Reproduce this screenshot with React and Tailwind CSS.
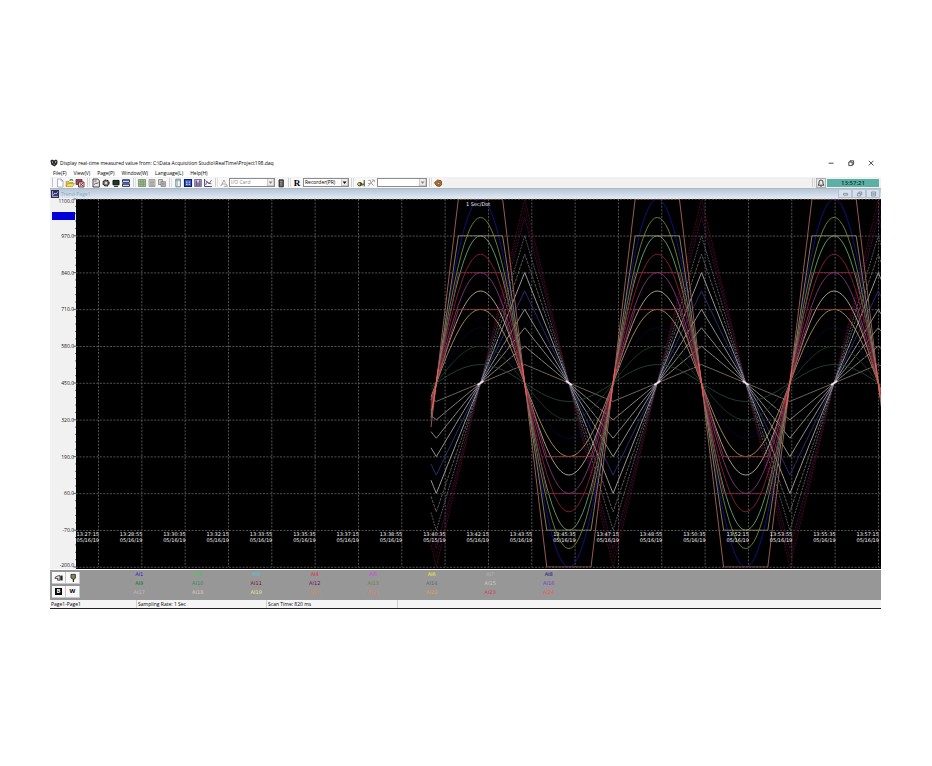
import { useState } from "react";
import clsx from "clsx";

// Chart geometry, in viewBox units
const CHART_W = 831;
const CHART_H = 371;
const PLOT_LEFT = 26;
const MID_Y = 185;
const UNIT = 18.4; // height of 65 engineering units
const START_X = 381;
const ZERO_X = 386.3; // first rising zero crossing
const QUARTER = 44.2;

const MENUS = ["File(F)", "View(V)", "Page(P)", "Window(W)", "Language(L)", "Help(H)"];

const Y_TICKS = ["1100.0", "970.0", "840.0", "710.0", "580.0", "450.0", "320.0", "190.0", "60.0", "-70.0", "-200.0"];

const TIMES = [
  "13:27:15", "13:28:55", "13:30:35", "13:32:15", "13:33:55", "13:35:35", "13:37:15",
  "13:38:55", "13:40:35", "13:42:15", "13:43:55", "13:45:35", "13:47:15", "13:48:55",
  "13:50:35", "13:52:15", "13:53:55", "13:55:35", "13:57:15",
];

// shape, amplitude (in UNITs), colour, dash
const SERIES = [
  ["tri", 10, "#4c0c22", "2 1"],
  ["tri", 9, "#4a1040", "2 1"],
  ["tri", 9.5, "#360a20", "2 1"],
  ["tri", 8, "#5c625c", "2 1"],
  ["tri", 7, "#646464", "3 1"],
  ["tri", 6, "#a8a8a8"],
  ["tri", 5, "#30307e"],
  ["tri", 4, "#a0a0a0"],
  ["tri", 3, "#96968e"],
  ["tri", 2, "#98908c"],
  ["tri", 1, "#807068"],
  ["sin", 1, "#244638"],
  ["sin", 2, "#1c3a28"],
  ["sin", 3, "#09092c"],
  ["sin", 10, "#12128c"],
  ["sin", 9, "#6c8a3c"],
  ["sin", 8, "#5fa878"],
  ["trap", 8, "#94865c"],
  ["trap", 6, "#842044"],
  ["sin", 6, "#7c3a78"],
  ["sin", 7, "#8c2034"],
  ["sin", 5, "#b8ac94"],
  ["sin", 4, "#b08e5c"],
  ["trap", 4, "#94343a"],
  ["trap", 10, "#a8645a"],
];

const CHANNELS = [
  ["AI1", "text-[#2b1fd0]"], ["AI2", "text-[#35d04a]"], ["AI3", "text-[#45d0d8]"], ["AI4", "text-[#e02840]"],
  ["AI5", "text-[#d03ae0]"], ["AI6", "text-[#f0f030]"], ["AI7", "text-[#b4b4b4]"], ["AI8", "text-[#101080]"],
  ["AI9", "text-[#0a7a1a]"], ["AI10", "text-[#2f8a5e]"], ["AI11", "text-[#7a1030]"], ["AI12", "text-[#7a0a60]"],
  ["AI13", "text-[#7c7c4c]"], ["AI14", "text-[#6c6470]"], ["AI15", "text-[#cccccc]"], ["AI16", "text-[#7a3cc8]"],
  ["AI17", "text-[#c8b8bc]"], ["AI18", "text-[#dcc4c0]"], ["AI19", "text-[#ece48c]"], ["AI20", "text-[#d08c58]"],
  ["AI21", "text-[#d88468]"], ["AI22", "text-[#e0a03c]"], ["AI23", "text-[#dc3460]"], ["AI24", "text-[#e85c50]"],
];

function wave(shape, x) {
  const t = (x - ZERO_X) / QUARTER;
  if (shape === "sin") return Math.sin((t * Math.PI) / 2);
  // triangle trails the sine by a quarter period
  const p = shape === "tri" ? t - 1 : t;
  const tri = (2 / Math.PI) * Math.asin(Math.sin((p * Math.PI) / 2));
  return shape === "tri" ? tri : Math.max(-1, Math.min(1, tri * 2));
}

function seriesPath(shape, amp) {
  const pts = [];
  // every shape bends on a half quarter, so sample on those
  const step = QUARTER / 16;
  pts.push([START_X, wave(shape, START_X)]);
  for (let x = ZERO_X - step; x < CHART_W + step; x += step) pts.push([x, wave(shape, x)]);
  return pts
    .map(([x, v], i) => `${i ? "L" : "M"}${x.toFixed(1)} ${(MID_Y - v * amp * UNIT).toFixed(1)}`)
    .join("");
}

function TrendChart() {
  const rows = Y_TICKS.map((label, i) => ({ label, y: 1 + i * 36.8 }));
  const cols = TIMES.map((time, i) => ({ time, x: 48.5 + i * 43.33 }));
  return (
    <svg viewBox={`0 0 ${CHART_W} ${CHART_H}`} className="block h-auto w-full bg-[#f1f1f1]" role="img" aria-label="Trend-Page1">
      <defs>
        <clipPath id="plot">
          <rect x={PLOT_LEFT} y="1" width={CHART_W - PLOT_LEFT} height="368.5" />
        </clipPath>
      </defs>
      <rect x={PLOT_LEFT} y="1" width={CHART_W - PLOT_LEFT} height="370" fill="#000" />

      {/* Value axis */}
      <rect x="2" y="14" width="23" height="8" fill="#0000d8" />
      {rows.map(({ label, y }, i) => (
        <g key={label}>
          <text
            x="24"
            y={i === 0 ? 5 : i === 10 ? 369 : y + 2}
            textAnchor="end"
            fontSize="5"
            fill="#111"
          >
            {label}
          </text>
          <path d={`M23.5 ${y}H26`} stroke="#333" strokeWidth="0.8" />
          {i < 10 && [1, 2, 3, 4].map((n) => (
            <path key={n} d={`M25 ${y + n * 7.36}h1`} stroke="#444" strokeWidth="0.8" />
          ))}
        </g>
      ))}

      <g stroke="#5c5c5c" strokeWidth="0.9" strokeDasharray="2 1.4">
        {rows.map(({ label, y }) => (
          <path key={label} d={`M${PLOT_LEFT} ${y + 0.3}H${CHART_W}`} />
        ))}
        {cols.map(({ time, x }) => (
          <path key={time} d={`M${x} 1V369`} />
        ))}
      </g>

      <g clipPath="url(#plot)" fill="none" strokeWidth="0.9">
        {SERIES.map(([shape, amp, color, dash]) => (
          <path key={shape + amp} d={seriesPath(shape, amp)} stroke={color} strokeDasharray={dash} />
        ))}
        {/* bright knots where all the traces cross the centre value */}
        {[0, 1, 2, 3, 4, 5, 6, 7, 8, 9, 10].map((n) => {
          const x = ZERO_X + n * QUARTER;
          const down = n % 4 === 2;
          if (n % 2) return <path key={n} d={`M${x - 3} ${MID_Y + (n % 4 === 1 ? 2 : -2)}L${x} ${MID_Y}l3 ${n % 4 === 1 ? -2 : 2}`} stroke="#f4dff0" strokeWidth="1.6" />;
          return <path key={n} d={down ? `M${x - 3} ${MID_Y - 20}L${x + 2} ${MID_Y + 14}` : `M${x + 2} ${MID_Y - 14}L${x - 4} ${MID_Y + 26}`} stroke="#f0605a" strokeWidth="1.3" opacity="0.85" />;
        })}
      </g>

      <g fill="#f4f4f4" fontSize="5" fontFamily="'DejaVu Sans', sans-serif">
        <text x="416" y="8">1 Sec/Dot</text>
        {cols.map(({ time, x }, i) => (
          <g key={time} textAnchor="end">
            <text x={x + 0.5} y="338">{time}</text>
            <text x={x + 0.5} y="344">{i === 8 ? "05/15/19" : "05/16/19"}</text>
          </g>
        ))}
      </g>
    </svg>
  );
}

function Icon({ children }) {
  return (
    <svg viewBox="0 0 10 10" className="h-[10px] w-[10px] shrink-0" fill="none" aria-hidden="true">
      {children}
    </svg>
  );
}

function ToolButton({ label, children }) {
  return (
    <button type="button" aria-label={label} className="flex h-[10px] w-[10px] shrink-0 items-center justify-center">
      {children}
    </button>
  );
}

function Separator() {
  return (
    <span className="flex w-[6px] shrink-0 justify-center gap-px">
      <span className="h-[9px] w-px bg-[#cfcfcf]" />
      <span className="h-[9px] w-px bg-[#dedede]" />
    </span>
  );
}

function ComboBox({ label, value, options, onChange, muted, wide }) {
  return (
    <span className={clsx("flex h-[9px] shrink-0 items-center border border-[#8c8c8c] bg-white", wide ? "w-[50px]" : "w-[46px]")}>
      <select
        aria-label={label}
        value={value}
        onChange={(e) => onChange(e.target.value)}
        className={clsx("h-[7px] min-w-0 flex-1 appearance-none bg-white pl-px text-[5px] leading-[7px] outline-none", muted ? "text-[#8a8a8a]" : "text-black")}
      >
        {options.map((o) => (
          <option key={o} value={o}>{o}</option>
        ))}
      </select>
      <svg viewBox="0 0 7 7" className="h-[7px] w-[7px] shrink-0" aria-hidden="true">
        <path d="M0 0h7v7H0z" fill="#ececec" />
        <path d="M0.3 0v7M0 6.7h7M6.7 0v7" stroke="#aaa" strokeWidth="0.6" />
        <path d="M1.6 2.6h4L3.6 5z" fill={muted ? "#888" : "#111"} />
      </svg>
    </span>
  );
}

function Toolbar() {
  const [card, setCard] = useState("I/O Card");
  const [recorder, setRecorder] = useState("Recorder(PR)");
  const [device, setDevice] = useState("");

  return (
    <div className="flex h-3 items-center border-b border-[#b4b8bc] bg-[#f1f1f1] pr-[2px]">
      <div className="flex items-center bg-[#f8f8f8] pl-[2px]">
        <span className="mr-[2px] h-[9px] w-px bg-[#c4c4c4]" />
        <ToolButton label="New">
          <Icon><path d="M2.5 1h3.6L8 3v6H2.5z" fill="#fff" stroke="#8a94a8" strokeWidth="0.7" /><path d="M6 1v2h2" stroke="#8a94a8" strokeWidth="0.6" /></Icon>
        </ToolButton>
        <ToolButton label="Open">
          <Icon><path d="M1 8.5V3.5h3l1 1h3v1" fill="#e8c440" stroke="#a88420" strokeWidth="0.6" /><path d="M1 8.6l2-3.2h6.4L7.6 8.6z" fill="#f6dc50" stroke="#a88420" strokeWidth="0.6" /><path d="M4.6 2.6Q6.4.6 8 2.6" stroke="#2f8a3c" strokeWidth="1.1" /></Icon>
        </ToolButton>
        <ToolButton label="Close project">
          <Icon><path d="M1 1.5h6v5H1z" fill="#a04858" stroke="#502028" strokeWidth="0.7" /><path d="M3.5 4H9v5H3.5z" fill="#ddd" stroke="#44202c" strokeWidth="0.8" /><path d="M4.6 5l3.4 3M8 5L4.6 8" stroke="#b02030" strokeWidth="1" /></Icon>
        </ToolButton>
        <Separator />
        <ToolButton label="Report">
          <Icon><path d="M2 1h4.8L8.4 2.8V9H2z" fill="#e8e8e8" stroke="#333" strokeWidth="0.9" /><path d="M3.2 6.8l1.6-2 1 1.2L7.4 4M3.2 3h2.4" stroke="#333" strokeWidth="0.7" /></Icon>
        </ToolButton>
        <ToolButton label="Settings">
          <Icon><circle cx="5" cy="5" r="3" fill="#777" stroke="#222" strokeWidth="1.2" strokeDasharray="1.8 0.6" /><circle cx="5" cy="5" r="1.2" fill="#ddd" /></Icon>
        </ToolButton>
        <ToolButton label="Monitor">
          <Icon><path d="M2 2.4h6v4.4H2z" fill="#153c24" stroke="#111" strokeWidth="1" /><path d="M3 8.4h4" stroke="#222" strokeWidth="1" /></Icon>
        </ToolButton>
        <ToolButton label="Windows">
          <Icon><path d="M1.5 1.8h7v2.6h-7zM1.5 5.8h7v2.6h-7z" fill="#dde4f4" stroke="#1c2c60" strokeWidth="0.9" /><path d="M1.5 2.2h7M1.5 6.2h7" stroke="#1c2c60" strokeWidth="0.9" /></Icon>
        </ToolButton>
        <Separator />
        <ToolButton label="Grid">
          <Icon><path d="M1.4 1.5h7.2v7H1.4z" fill="#a4c49c" stroke="#648060" strokeWidth="0.7" /><path d="M1.4 3.8h7.2M1.4 6.2h7.2M3.8 1.5v7M6.2 1.5v7" stroke="#648060" strokeWidth="0.6" /></Icon>
        </ToolButton>
        <ToolButton label="List">
          <Icon><path d="M2 1.5h6v7H2z" fill="#d0d0cc" stroke="#888" strokeWidth="0.7" /><path d="M3 3.2h4M3 4.6h4M3 6h4M3 7.3h4" stroke="#77806e" strokeWidth="0.6" /></Icon>
        </ToolButton>
        <ToolButton label="Copy">
          <Icon><path d="M1.5 1.5h4v5h-4z" fill="#ccc" stroke="#777" strokeWidth="0.7" /><path d="M4 3.6h4.4v5H4z" fill="#bbb" stroke="#777" strokeWidth="0.7" /><path d="M5 5.4h2.4M5 6.8h2.4" stroke="#777" strokeWidth="0.6" /></Icon>
        </ToolButton>
        <Separator />
        <ToolButton label="Page">
          <Icon><path d="M2.8 1.2h4.6v7.6H2.8z" fill="#eef4f4" stroke="#4c7078" strokeWidth="0.8" /><path d="M2.8 2.6h4.6M4.2 2.6v6" stroke="#6c9098" strokeWidth="0.6" /></Icon>
        </ToolButton>
        <ToolButton label="Overview">
          <Icon><path d="M1.5 1.5h7v7h-7z" fill="#3858c0" stroke="#101c58" strokeWidth="1.1" /><path d="M3 3.4h1.6v1.4H3zM5.6 3.4h1.6v1.4H5.6zM3 5.8h1.6v1.2H3zM5.6 5.8h1.6v1.2H5.6z" fill="#b0c4f8" /></Icon>
        </ToolButton>
        <ToolButton label="Bar graph">
          <Icon><path d="M1.6 1.5h6.8v7H1.6z" fill="#ccc8e4" stroke="#50486c" strokeWidth="0.7" /><path d="M3.2 8V2.6M5 8V4.4M6.9 8V2.2" stroke="#54306c" strokeWidth="1.1" /></Icon>
        </ToolButton>
        <ToolButton label="Trend">
          <Icon><path d="M1.6 1v7.5h7.2" stroke="#333860" strokeWidth="0.9" /><path d="M2.6 7l1.6-3.4 2 2L8.6 2M2.6 2.4l2.4 2.8 3.4.6" stroke="#54486c" strokeWidth="0.8" /></Icon>
        </ToolButton>
        <Separator />
        <ToolButton label="Card">
          <Icon><path d="M1.8 8.2L5 2l1.2 2.6M3 6h4l1.4 2.4H5" stroke="#a0a0a0" strokeWidth="0.9" /></Icon>
        </ToolButton>
        <ComboBox label="I/O card" value={card} options={["I/O Card"]} onChange={setCard} muted />
        <span className="ml-px flex">
          <ToolButton label="Card info">
            <Icon><path d="M3 1.8h4.4v7H3z" fill="#555" stroke="#222" strokeWidth="0.8" /><path d="M4 3.4h2.4M4 5.2h2.4M4 7h2.4" stroke="#ccc" strokeWidth="0.6" /></Icon>
          </ToolButton>
        </span>
        <Separator />
        <ToolButton label="Recorder">
          <span className="font-['Liberation_Serif',serif] text-[9px] leading-[10px] font-bold text-black">R</span>
        </ToolButton>
        <span className="ml-px flex">
          <ComboBox label="Recorder" value={recorder} options={["Recorder(PR)"]} onChange={setRecorder} />
        </span>
        <Separator />
        <span className="ml-px flex">
          <ToolButton label="Link">
            <Icon><path d="M4.2 5a1.6 1.6 0 1 0 0 2.6M4.4 4.2v4M6 8L5.4 4.6M8.2 2v6.4M5.6 6.2h2.6" stroke="#3a3a14" strokeWidth="1" /><path d="M2.2 5.6h1.6v1.4H2.2z" fill="#d8c438" /></Icon>
          </ToolButton>
          <ToolButton label="Tools">
            <Icon><path d="M2 8.4L7.6 2.4M2.2 2.4h2.4v2L7.4 7.6M6 2h2.4v2M2 5.6h2.2" stroke="#a4a4a4" strokeWidth="1" /></Icon>
          </ToolButton>
        </span>
        <span className="ml-px flex">
          <ComboBox label="Device" value={device} options={[""]} onChange={setDevice} muted wide />
        </span>
        <Separator />
        <ToolButton label="Sound">
          <Icon><path d="M1.4 4.8L4.6 2l3.6.8.6 3.8-2 1.8-3-.4z" fill="#b87838" stroke="#6c3c14" strokeWidth="0.8" /><path d="M4 4.2l3 .4-.4 2.4-2.2-.6z" fill="#f0c890" stroke="#5c2c10" strokeWidth="0.6" /></Icon>
        </ToolButton>
      </div>

      <div className="ml-auto flex items-center">
        <Separator />
        <button type="button" aria-label="Alarm" className="mr-px flex h-[10px] w-[10px] items-center justify-center border border-[#b0b0b0] bg-[#e6e6e6]">
          <svg viewBox="0 0 8 8" className="h-2 w-2 shrink-0" fill="none" stroke="#222" strokeWidth="0.8" aria-hidden="true">
            <path d="M1 6.2h6L6 5V3a2 2 0 0 0-4 0v2zM3.2 7.2h1.6" />
          </svg>
        </button>
        <time className="h-2 w-[52px] bg-[#5cb0a6] text-center text-[6px] leading-2 font-semibold text-[#0c2c2c]">13:57:21</time>
      </div>
    </div>
  );
}

function TitleBar() {
  return (
    <header className="flex h-3 items-center pr-[5px]">
      <svg viewBox="0 0 8 8" className="h-2 w-2 shrink-0" aria-hidden="true">
        <path d="M.4 1.8L2 .6l2 .8L6 .5l1.6 1.4-.4 3L4.6 7.6 1.4 5.8z" fill="#222" />
        <path d="M1.6 2.4l1.6.4-.4 1.4zM4.8 2.6l1.6-.4-.6 2z" fill="#e8e8e8" />
        <path d="M3.4 5.2h1.6" stroke="#bbb" strokeWidth="0.7" />
      </svg>
      <h1 className="ml-[2px] text-[5px] leading-2 whitespace-nowrap text-black">
        Display real-time measured value from: C:\Data Acquisition Studio\RealTime\Project198.daq
      </h1>
      <div className="ml-auto flex gap-[10px]">
        <ToolButton label="Minimize">
          <Icon><path d="M2.6 5.2h5" stroke="#222" strokeWidth="0.8" /></Icon>
        </ToolButton>
        <ToolButton label="Restore">
          <Icon><path d="M2.8 4h3.4v3.6H2.8zM4 4V2.8h3.6v3.6H6.4" stroke="#222" strokeWidth="0.8" /></Icon>
        </ToolButton>
        <ToolButton label="Close">
          <Icon><path d="M2.8 2.8l4.6 4.6M7.4 2.8L2.8 7.4" stroke="#222" strokeWidth="0.8" /></Icon>
        </ToolButton>
      </div>
    </header>
  );
}

function ChildTitleBar() {
  return (
    <div className="flex h-[9px] items-center bg-linear-to-b from-[#b4c6d8] to-[#dfe9f3] pr-px">
      <svg viewBox="0 0 8 8" className="ml-px h-2 w-2 shrink-0" fill="none" aria-hidden="true">
        <path d="M0 0h8v8H0z" fill="#302c60" />
        <path d="M1.6 1v5.4H7M2.4 5l1.4-2 1.4 1.2L6.8 1.6" stroke="#d0d0f4" strokeWidth="0.8" />
      </svg>
      <h2 className="ml-[2px] text-[5px] leading-2 text-[#86a4be]">Trend-Page1</h2>
      <div className="ml-auto flex">
        {[
          ["Minimize page", "M4.6 3.4h4v1.8h-4z"],
          ["Restore page", "M4.4 3.4h3v2.6h-3zM5.8 3.2V2h3v2.6H7.6"],
          ["Close page", "M4.6 2h4v4h-4zM5.6 3l2 2M7.6 3l-2 2"],
        ].map(([label, d]) => (
          <button key={label} type="button" aria-label={label} className="h-2 w-[14px] border-x border-b border-[#b4c2d0] bg-[#d6e0ea]">
            <svg viewBox="0 0 12 7" className="block h-[7px] w-3" fill="none" stroke="#68788c" strokeWidth="0.7" aria-hidden="true">
              <path d={d} />
            </svg>
          </button>
        ))}
      </div>
    </div>
  );
}

function LegendPanel() {
  const key = "flex h-3 w-[14px] items-center justify-center border-r border-b border-[#c8c8c8] bg-[#f8f8f8]";
  return (
    <section className="flex h-[31px] border-t border-white bg-[#979797] pt-[2px] pl-[2px]">
      <div className="grid grid-cols-2 content-start gap-y-[2px]">
        <button type="button" aria-label="Point" className={key}>
          <Icon><path d="M1 4.4l3-1.6h2v4.4H3.6L4 5.4H1z" fill="#eee" stroke="#222" strokeWidth="0.8" /><path d="M6.4 2.6h2.2v4.8H6.4z" fill="#222" /></Icon>
        </button>
        <button type="button" aria-label="Marker" className={key}>
          <Icon><path d="M3 1.4h4.4v3.8L5.8 6.4 3 5z" fill="#84844c" stroke="#222" strokeWidth="0.8" /><path d="M5.4 6v3" stroke="#222" strokeWidth="1.2" /></Icon>
        </button>
        <button type="button" aria-label="Black background" className={key}>
          <span className="h-[7px] w-[7px] bg-black text-center text-[6px] leading-[7px] font-bold text-white">B</span>
        </button>
        <button type="button" aria-label="White background" className={key}>
          <span className="text-[6px] leading-[7px] font-bold text-black">W</span>
        </button>
      </div>
      <ul className="ml-[30px] grid w-[468px] grid-cols-8 content-start font-['DejaVu_Sans',sans-serif]">
        {CHANNELS.map(([name, color]) => (
          <li key={name} className={clsx("h-[9px] text-center text-[5px] leading-[5px]", color)}>{name}</li>
        ))}
      </ul>
    </section>
  );
}

function App() {
  return (
    <div className="min-h-screen bg-white pt-[157px] pr-[51px] pl-[50px] font-['Open_Sans','Noto_Sans',sans-serif]">
      <main>
        <TitleBar />
        <nav className="flex h-2 gap-[7px] pl-[3px]">
          {MENUS.map((m) => (
            <button key={m} type="button" className="text-[5px] leading-[7px] text-black">{m}</button>
          ))}
        </nav>
        <Toolbar />
        <ChildTitleBar />
        <TrendChart />
        <LegendPanel />
        <footer className="flex h-[9px] border-b border-[#222] bg-[#f5f5f5] text-[5px] leading-2 text-black">
          <span className="w-[87px] border-r border-[#d0d0d0] pl-px">Page1-Page1</span>
          <span className="w-[130px] border-r border-[#d0d0d0] pl-px">Sampling Rate: 1 Sec</span>
          <span className="w-[131px] border-r border-[#d0d0d0] pl-px">Scan Time: 820 ms</span>
        </footer>
      </main>
    </div>
  );
}

export default App;
